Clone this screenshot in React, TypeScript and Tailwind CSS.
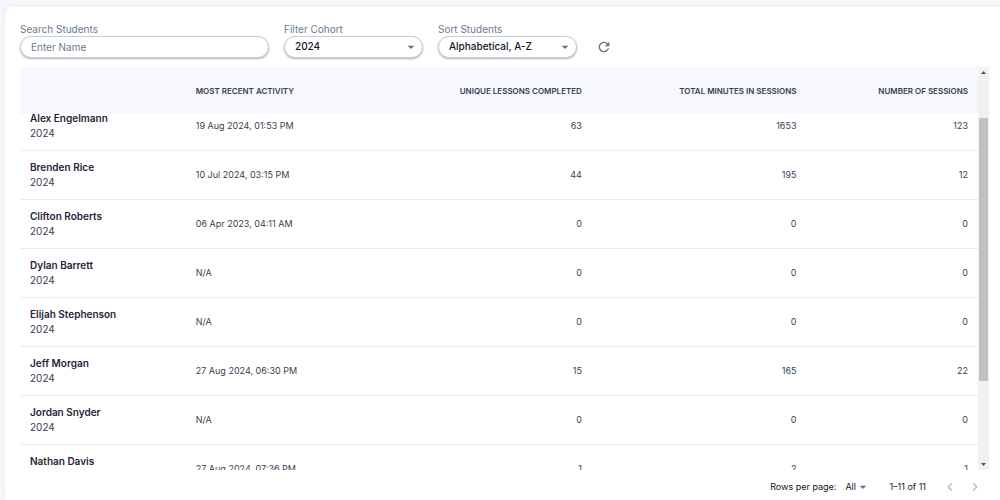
import { useLayoutEffect, useRef } from "react";
import type { ReactNode } from "react";
import { MdArrowDropDown, MdChevronLeft, MdChevronRight, MdRefresh } from "react-icons/md";

type Student = {
  name: string;
  cohort: string;
  activity: string;
  lessons: number;
  minutes: number;
  sessions: number;
};

const students: Student[] = [
  { name: "Alex Engelmann", cohort: "2024", activity: "19 Aug 2024, 01:53 PM", lessons: 63, minutes: 1653, sessions: 123 },
  { name: "Brenden Rice", cohort: "2024", activity: "10 Jul 2024, 03:15 PM", lessons: 44, minutes: 195, sessions: 12 },
  { name: "Clifton Roberts", cohort: "2024", activity: "06 Apr 2023, 04:11 AM", lessons: 0, minutes: 0, sessions: 0 },
  { name: "Dylan Barrett", cohort: "2024", activity: "N/A", lessons: 0, minutes: 0, sessions: 0 },
  { name: "Elijah Stephenson", cohort: "2024", activity: "N/A", lessons: 0, minutes: 0, sessions: 0 },
  { name: "Jeff Morgan", cohort: "2024", activity: "27 Aug 2024, 06:30 PM", lessons: 15, minutes: 165, sessions: 22 },
  { name: "Jordan Snyder", cohort: "2024", activity: "N/A", lessons: 0, minutes: 0, sessions: 0 },
  { name: "Nathan Davis", cohort: "2024", activity: "27 Aug 2024, 07:36 PM", lessons: 1, minutes: 2, sessions: 1 },
];

function Field({ id, label, className, children }: { id: string; label: string; className: string; children: ReactNode }) {
  return (
    <div className={className}>
      <label htmlFor={id} className="block text-[10px] leading-[14px] text-[#6b7a90]">
        {label}
      </label>
      {children}
    </div>
  );
}

function PillSelect({ id, value }: { id: string; value: string }) {
  return (
    <div className="relative">
      <select
        id={id}
        defaultValue={value}
        className="block h-[22px] w-full appearance-none rounded-full border border-[#c8cdd6] bg-white pr-6 pb-px pl-[10px] text-[10px] font-medium text-[#121828] shadow-[0_1px_2px_rgba(50,60,80,0.4)] outline-none"
      >
        <option>{value}</option>
      </select>
      <MdArrowDropDown className="pointer-events-none absolute top-[3px] right-1 size-4 text-[#65748b]" />
    </div>
  );
}

function ScrollTrack() {
  return (
    <div aria-hidden="true" className="flex w-[11px] shrink-0 flex-col items-center bg-[#f1f1f1]">
      <svg viewBox="0 0 11 11" className="size-[11px] fill-[#505050]">
        <path d="M3 7h5L5.5 4z" />
      </svg>
      <div className="grow-[40]" />
      <div className="w-[9px] grow-[262] bg-[#c1c1c1]" />
      <div className="grow-[78]" />
      <svg viewBox="0 0 11 11" className="size-[11px] fill-[#505050]">
        <path d="M3 4h5L5.5 7z" />
      </svg>
    </div>
  );
}

export default function App() {
  const scroller = useRef<HTMLDivElement>(null);

  useLayoutEffect(() => {
    if (scroller.current) scroller.current.scrollTop = 12;
  }, []);

  const head = "sticky top-0 z-10 h-[47px] bg-[#f6f8fd] px-[10px] text-[8px] font-semibold text-[#374151] uppercase";
  const cell = "h-[49px] border-b border-[#e9ebee] px-[10px] text-[9px] text-[#374151]";

  return (
    <div className="flex h-screen flex-col bg-[#f7f8fb] pt-[7px] pl-[5px] font-['Inter',sans-serif]">
      <main className="flex min-h-0 flex-1 flex-col rounded-tl-lg bg-white pt-[15px] pr-[11px] pl-[15px] shadow-[0_0_8px_rgba(100,116,139,0.1)]">
        <form className="flex items-end gap-[15px]" onSubmit={(e) => e.preventDefault()}>
          <Field id="search" label="Search Students" className="w-[249px]">
            <input
              id="search"
              type="text"
              placeholder="Enter Name"
              className="block h-[22px] w-full rounded-full border border-[#c8cdd6] bg-white px-[10px] pb-px text-[10px] text-[#121828] shadow-[0_1px_2px_rgba(50,60,80,0.4)] outline-none placeholder:text-[#6b7a90]"
            />
          </Field>
          <Field id="cohort" label="Filter Cohort" className="w-[139px]">
            <PillSelect id="cohort" value="2024" />
          </Field>
          <Field id="sort" label="Sort Students" className="w-[139px]">
            <PillSelect id="sort" value="Alphabetical, A-Z" />
          </Field>
          <button type="button" aria-label="Refresh" className="ml-1 flex h-[22px] items-center text-[#6b7280]">
            <MdRefresh className="size-4" />
          </button>
        </form>

        <div className="mt-[9px] flex min-h-0 flex-1">
          <div ref={scroller} className="min-w-0 flex-1 overflow-y-auto [scrollbar-width:none]">
            <table className="w-full table-fixed border-separate border-spacing-0">
              <colgroup>
                <col className="w-[17.3%]" />
                <col className="w-[20.4%]" />
                <col className="w-[22%]" />
                <col className="w-[22.4%]" />
                <col className="w-[17.9%]" />
              </colgroup>
              <thead>
                <tr>
                  <th scope="col" aria-label="Student" className={head} />
                  <th scope="col" className={`${head} text-left`}>Most recent activity</th>
                  <th scope="col" className={`${head} text-right`}>Unique lessons completed</th>
                  <th scope="col" className={`${head} text-right`}>Total minutes in sessions</th>
                  <th scope="col" className={`${head} text-right`}>Number of sessions</th>
                </tr>
              </thead>
              <tbody>
                {students.map((s) => (
                  <tr key={s.name}>
                    <td className={cell}>
                      <div className="text-[10px] leading-[15px] font-semibold text-[#1f2537]">{s.name}</div>
                      <div className="text-[10px] leading-[15px] text-[#374151]">{s.cohort}</div>
                    </td>
                    <td className={cell}>{s.activity}</td>
                    <td className={`${cell} text-right`}>{s.lessons}</td>
                    <td className={`${cell} text-right`}>{s.minutes}</td>
                    <td className={`${cell} text-right`}>{s.sessions}</td>
                  </tr>
                ))}
              </tbody>
            </table>
          </div>
          <ScrollTrack />
        </div>

        <footer className="flex h-[30px] items-center justify-end pt-[3px] pr-[6px] text-[9px] text-[#121828]">
          <label htmlFor="rows">Rows per page:</label>
          <div className="relative ml-[9px] w-6">
            <select id="rows" defaultValue="All" className="block w-full appearance-none bg-transparent outline-none">
              <option>All</option>
            </select>
            <MdArrowDropDown className="pointer-events-none absolute -top-px left-[10px] size-4 text-[#65748b]" />
          </div>
          <span className="ml-5">1–11 of 11</span>
          <button type="button" disabled aria-label="Previous page" className="ml-4 text-[#b5b9c1]">
            <MdChevronLeft className="size-4" />
          </button>
          <button type="button" disabled aria-label="Next page" className="ml-[9px] text-[#b5b9c1]">
            <MdChevronRight className="size-4" />
          </button>
        </footer>
      </main>
    </div>
  );
}
